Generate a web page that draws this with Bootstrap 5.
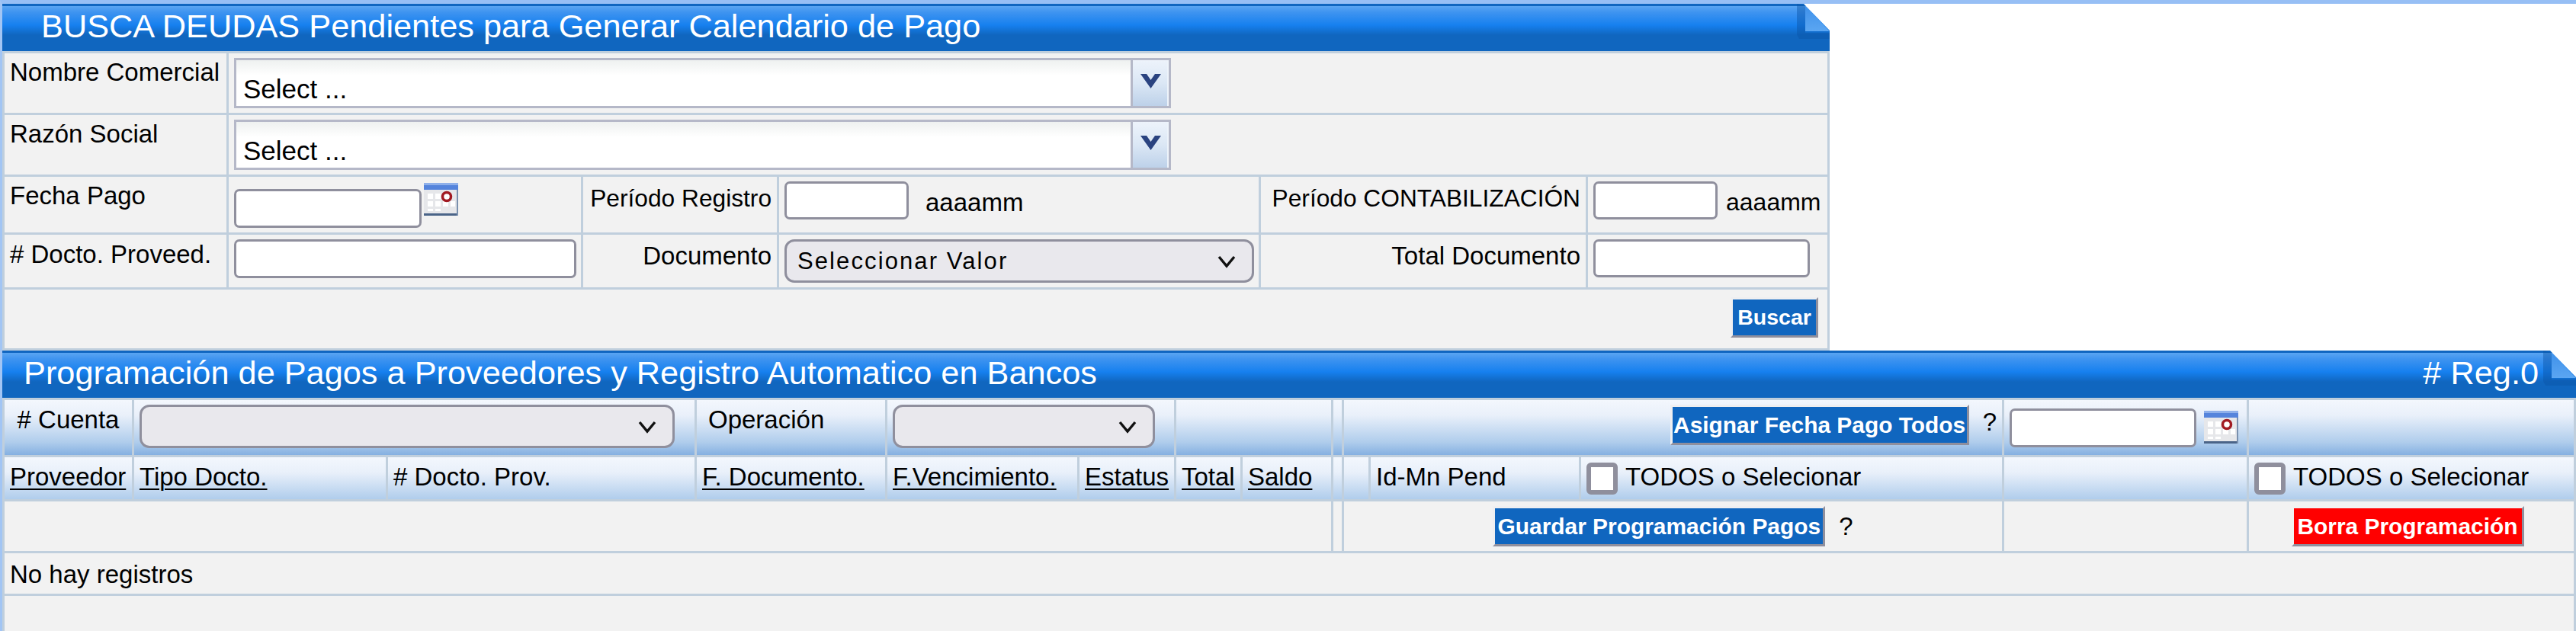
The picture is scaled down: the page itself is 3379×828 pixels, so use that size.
<!DOCTYPE html>
<html lang="es">
<head>
<meta charset="utf-8">
<title>Busca Deudas</title>
<link href="https://cdn.jsdelivr.net/npm/bootstrap@5.3.0/dist/css/bootstrap.min.css" rel="stylesheet">
<style>
html,body{height:100%}
body{margin:0;background:#fff;border-top:5px solid #97bff5;border-left:3px solid #a2c5f4;font-family:"Liberation Sans",Arial,sans-serif;font-size:33px;line-height:1.2;color:#000;overflow:hidden;box-sizing:border-box;width:3379px;height:828px}
.panel-a{width:2397px}
.panel-b{width:3376px}
.banner{height:62px;border-top:3px solid #1066c0;background:linear-gradient(#5aa5f2 0,#3f94f0 8px,#1680ef 25px,#1066bf 38px,#1066bf 100%);color:#fff;font-size:43.3px;line-height:52px;position:relative;padding-right:49px}
.banner-a{padding-left:51px}
.banner-b{padding-left:28px}
.fold{position:absolute;right:0;top:-3px;width:46px;height:46px;display:block}
.sheet.table{width:100%;table-layout:fixed;border-collapse:separate;border-spacing:0;margin:0;border-top:3px solid #c0cfdd;border-left:3px solid #c0cfdd;background:#f2f2f2;color:#000;--bs-table-bg:transparent}
.sheet.table>:not(caption)>*>*{padding:5px 7px;border-style:solid;border-color:#c0cfdd;border-width:0 3px 3px 0;box-shadow:none;background-color:#f2f2f2;color:#000;vertical-align:top;font-size:33px;line-height:1.2;overflow:visible;white-space:nowrap}
.sheet-a col:nth-child(1){width:294px}.sheet-a col:nth-child(2){width:465px}.sheet-a col:nth-child(3){width:257px}
.sheet-a col:nth-child(4){width:632px}.sheet-a col:nth-child(5){width:429px}.sheet-a col:nth-child(6){width:317px}
.sheet-b col:nth-child(1){width:170px}.sheet-b col:nth-child(2){width:333px}.sheet-b col:nth-child(3){width:405px}
.sheet-b col:nth-child(4){width:250px}.sheet-b col:nth-child(5){width:252px}.sheet-b col:nth-child(6){width:127px}
.sheet-b col:nth-child(7){width:87px}.sheet-b col:nth-child(8){width:119px}.sheet-b col:nth-child(9){width:14px}
.sheet-b col:nth-child(10){width:35px}.sheet-b col:nth-child(11){width:276px}.sheet-b col:nth-child(12){width:555px}
.sheet-b col:nth-child(13){width:321px}.sheet-b col:nth-child(14){width:429px}
.h81{height:81px}.h76{height:76px}.h72{height:72px}.h80{height:80px}.h75{height:75px}.h58{height:58px}.h68{height:68px}.h56{height:56px}.h46{height:46px}
.sheet.table>:not(caption)>*>.gap9{padding-top:9px}
.sheet.table>:not(caption)>*>.gap8{padding-top:8px}
.sheet.table>:not(caption)>*>.gap6{padding-top:6px}
.sheet.table>:not(caption)>*>.lead-in{padding-left:15px}
.sheet.table>:not(caption)>*>.tight{font-size:31.7px}
.sheet.table>:not(caption)>*>.band{background:linear-gradient(#f3f7fd 0,#e9f0fa 20px,#b0cdec 55px,#7eabdf 75px)}
.sheet.table>:not(caption)>*>.nolast{border-bottom-width:0}
.combo{width:1229px;height:66px;margin-top:1px;border:3px solid #b5b8c8;background:linear-gradient(#eef1f0,#fff 20px)}
.combo-text{flex:1 1 auto;min-width:0;border:0;background:transparent;font-size:35px;line-height:1;padding:16px 0 0 9px;color:#000;font-family:inherit;outline:0}
.combo-btn{width:50px;border:0;border-left:3px solid #b5b8c8;background:linear-gradient(#edf3fb,#dbe7f5 50%,#bdd1e9);padding:0;box-shadow:inset -2px 0 0 #eef4fb}
.combo-btn svg{display:block;margin:-6px auto 0}
.sheet .field{border:3px solid #8f8f9d;border-radius:7px;background:#fff;padding:0 6px;font-size:30px;box-shadow:none;min-height:0;display:block}
.f246{width:246px;height:51px;margin-top:11px}
.f163{width:163px;height:50px;margin-top:1px}
.f449{width:449px;height:51px;margin-top:1px}
.f284{width:284px;height:50px;margin-top:1px}
.f245{width:245px;height:51px;margin-top:6px}
.sheet .pick{height:57px;border:3px solid #8f8f9d;border-radius:13px;background-color:#e9e8ed;color:#000;font-family:"Liberation Sans",Arial,sans-serif;font-size:31px;letter-spacing:2.1px;padding:0 40px 0 14px;line-height:1;background-position:right 20px center;background-size:26px 20px;box-shadow:none;margin-top:1px;background-image:url("data:image/svg+xml,%3csvg xmlns='http://www.w3.org/2000/svg' viewBox='0 0 26 20'%3e%3cpath fill='none' stroke='%23111' stroke-width='3.4' d='M3 4l10 12L23 4'/%3e%3c/svg%3e")}
.p616{width:616px}.p702{width:702px}.p344{width:344px}
.cal{width:45px;height:43px;flex:none;display:block}
.cal-a{margin:3px 0 0 3px}
.cal-b{margin:9px 0 0 10px}
.hint-a{margin:9px 0 0 22px}
.hint-b{margin:9px 0 0 11px;font-size:32px}
.act.btn{border-radius:0;border-width:3px;border-style:solid;border-color:#efeff1 #8f8f9d #8f8f9d #efeff1;background:#1066bf;color:#fff;font-family:"Liberation Sans",Arial,sans-serif;font-weight:700;font-size:29.9px;line-height:1;padding:0;height:53px;white-space:nowrap}
.act.danger{background:#f00;border-color:#f2f2f2 #8f8f9d #8f8f9d #f2f2f2}
.act.w115{width:115px;margin:5px 5px 0 0;font-size:28.5px}
.w392{width:392px;margin-top:1px}
.w436{width:436px;margin-top:1px}
.w305{width:305px;margin:1px 10px 0 0}
.ask-a{margin:4px 0 0 18px}
.ask-b{margin:8px 0 0 18px}
.sheet a{color:#000;text-decoration:underline;text-underline-offset:4px;text-decoration-thickness:2px}
.tick.form-check-input{width:41px;height:42px;margin:1px 10px 0 0;border:6px solid #8f8f9d;border-radius:6px;background:#fff;flex:none;float:none}
</style>
</head>
<body>
<section class="panel-a">
  <div class="banner banner-a">BUSCA DEUDAS Pendientes para Generar Calendario de Pago
    <svg class="fold" viewBox="0 0 46 46"><defs><linearGradient id="fa" x1="0" y1="0" x2="0" y2="1"><stop offset="0" stop-color="#3f91ea"/><stop offset="1" stop-color="#5ba6f2"/></linearGradient></defs><polygon points="3,0 14,3 14,38 46,38 46,46 6,46 3,40" fill="#0c55a6" opacity=".45"/><polygon points="14,3 46,36 14,36" fill="url(#fa)"/><polygon points="12,0 46,0 46,35" fill="#fff"/></svg>
  </div>
  <table class="table sheet sheet-a">
    <colgroup><col><col><col><col><col><col></colgroup>
    <tbody>
      <tr class="h81"><td>Nombre Comercial</td><td colspan="5">
        <div class="combo d-flex"><input class="combo-text" type="text" value="Select ..." aria-label="Nombre Comercial"><button class="combo-btn" type="button" aria-label="Abrir"><svg width="29" height="20" viewBox="0 0 29 20"><path d="M1 1h8l5.500 8L20 1h8L14.500 20z" fill="#2a4380"/></svg></button></div>
      </td></tr>
      <tr class="h81"><td>Razón Social</td><td colspan="5">
        <div class="combo d-flex"><input class="combo-text" type="text" value="Select ..." aria-label="Razón Social"><button class="combo-btn" type="button" aria-label="Abrir"><svg width="29" height="20" viewBox="0 0 29 20"><path d="M1 1h8l5.500 8L20 1h8L14.500 20z" fill="#2a4380"/></svg></button></div>
      </td></tr>
      <tr class="h76"><td>Fecha Pago</td>
        <td><div class="d-flex align-items-start"><input class="form-control field f246" type="text" aria-label="Fecha Pago">
          <svg class="cal cal-a" viewBox="0 0 45 43"><rect width="45" height="43" fill="#e6e7ea"/><rect width="45" height="3" fill="#8fb0ea"/><rect y="3" width="45" height="6" fill="#5584dc"/><g fill="#fff"><rect x="5" y="14" width="7" height="7"/><rect x="15" y="14" width="7" height="7"/><rect x="5" y="24" width="7" height="7"/><rect x="15" y="24" width="7" height="7"/><rect x="25" y="24" width="7" height="7"/><rect x="35" y="24" width="6" height="7"/><rect x="5" y="34" width="7" height="3"/><rect x="15" y="34" width="7" height="3"/></g><circle cx="30" cy="18" r="5.500" fill="#fff" stroke="#a11a22" stroke-width="3.500"/><rect y="40" width="45" height="3" fill="#4a6488"/><rect x="43" y="9" width="2" height="34" fill="#7a90ae"/></svg></div></td>
        <td class="text-end gap9 tight">Período Registro</td>
        <td><div class="d-flex align-items-start"><input class="form-control field f163" type="text" aria-label="Período Registro"><span class="hint-a">aaaamm</span></div></td>
        <td class="text-end gap9 tight">Período CONTABILIZACIÓN</td>
        <td><div class="d-flex align-items-start"><input class="form-control field f163" type="text" aria-label="Período Contabilización"><span class="hint-b">aaaamm</span></div></td>
      </tr>
      <tr class="h72"><td class="gap6"># Docto. Proveed.</td>
        <td><input class="form-control field f449" type="text" aria-label="Docto"></td>
        <td class="text-end gap8">Documento</td>
        <td><select class="form-select pick p616" aria-label="Documento"><option>Seleccionar Valor</option></select></td>
        <td class="text-end gap8">Total Documento</td>
        <td><input class="form-control field f284" type="text" aria-label="Total Documento"></td>
      </tr>
      <tr class="h80"><td colspan="6" class="text-end"><button class="btn act w115" type="button">Buscar</button></td></tr>
    </tbody>
  </table>
</section>
<section class="panel-b">
  <div class="banner banner-b d-flex justify-content-between"><span>Programación de Pagos a Proveedores y Registro Automatico en Bancos</span><span># Reg.0</span>
    <svg class="fold" viewBox="0 0 46 46"><defs><linearGradient id="fb" x1="0" y1="0" x2="0" y2="1"><stop offset="0" stop-color="#3f91ea"/><stop offset="1" stop-color="#5ba6f2"/></linearGradient></defs><polygon points="3,0 14,3 14,38 46,38 46,46 6,46 3,40" fill="#0c55a6" opacity=".45"/><polygon points="14,3 46,36 14,36" fill="url(#fb)"/><polygon points="12,0 46,0 46,35" fill="#fff"/></svg>
  </div>
  <table class="table sheet sheet-b">
    <colgroup><col><col><col><col><col><col><col><col><col><col><col><col><col><col></colgroup>
    <tbody>
      <tr class="h75">
        <td class="band text-center gap6"># Cuenta</td>
        <td class="band" colspan="2"><select class="form-select pick p702" aria-label="Cuenta"><option></option></select></td>
        <td class="band gap6 lead-in">Operación</td>
        <td class="band" colspan="2"><select class="form-select pick p344" aria-label="Operación"><option></option></select></td>
        <td class="band" colspan="2"></td>
        <td class="band"></td>
        <td class="band" colspan="3"><div class="d-flex justify-content-end"><button class="btn act w392" type="button">Asignar Fecha Pago Todos</button><span class="ask-a">?</span></div></td>
        <td class="band"><div class="d-flex align-items-start"><input class="form-control field f245" type="text" aria-label="Fecha todos"><svg class="cal cal-b" viewBox="0 0 45 43"><rect width="45" height="43" fill="#e6e7ea"/><rect width="45" height="3" fill="#8fb0ea"/><rect y="3" width="45" height="6" fill="#5584dc"/><g fill="#fff"><rect x="5" y="14" width="7" height="7"/><rect x="15" y="14" width="7" height="7"/><rect x="5" y="24" width="7" height="7"/><rect x="15" y="24" width="7" height="7"/><rect x="25" y="24" width="7" height="7"/><rect x="35" y="24" width="6" height="7"/><rect x="5" y="34" width="7" height="3"/><rect x="15" y="34" width="7" height="3"/></g><circle cx="30" cy="18" r="5.500" fill="#fff" stroke="#a11a22" stroke-width="3.500"/><rect y="40" width="45" height="3" fill="#4a6488"/><rect x="43" y="9" width="2" height="34" fill="#7a90ae"/></svg></div></td>
        <td class="band"></td>
      </tr>
      <tr class="h58">
        <td class="band gap6"><a href="#">Proveedor</a></td>
        <td class="band gap6"><a href="#">Tipo Docto.</a></td>
        <td class="band gap6"># Docto. Prov.</td>
        <td class="band gap6"><a href="#">F. Documento.</a></td>
        <td class="band gap6"><a href="#">F.Vencimiento.</a></td>
        <td class="band gap6"><a href="#">Estatus</a></td>
        <td class="band gap6"><a href="#">Total</a></td>
        <td class="band gap6"><a href="#">Saldo</a></td>
        <td class="band"></td>
        <td class="band"></td>
        <td class="band gap6">Id-Mn Pend</td>
        <td class="band gap6"><div class="d-flex align-items-start"><input class="form-check-input tick" type="checkbox" aria-label="Todos"><span>TODOS o Selecionar</span></div></td>
        <td class="band"></td>
        <td class="band gap6"><div class="d-flex align-items-start"><input class="form-check-input tick" type="checkbox" aria-label="Todos borrar"><span>TODOS o Selecionar</span></div></td>
      </tr>
      <tr class="h68">
        <td colspan="8"></td>
        <td></td>
        <td colspan="3"><div class="d-flex justify-content-center"><button class="btn act w436" type="button">Guardar Programación Pagos</button><span class="ask-b">?</span></div></td>
        <td></td>
        <td class="text-center"><button class="btn act danger w305" type="button">Borra Programación</button></td>
      </tr>
      <tr class="h56"><td colspan="14" class="gap8">No hay registros</td></tr>
      <tr class="h46"><td colspan="14" class="nolast"></td></tr>
    </tbody>
  </table>
</section>
<script src="https://cdn.jsdelivr.net/npm/bootstrap@5.3.0/dist/js/bootstrap.bundle.min.js"></script>
</body>
</html>
